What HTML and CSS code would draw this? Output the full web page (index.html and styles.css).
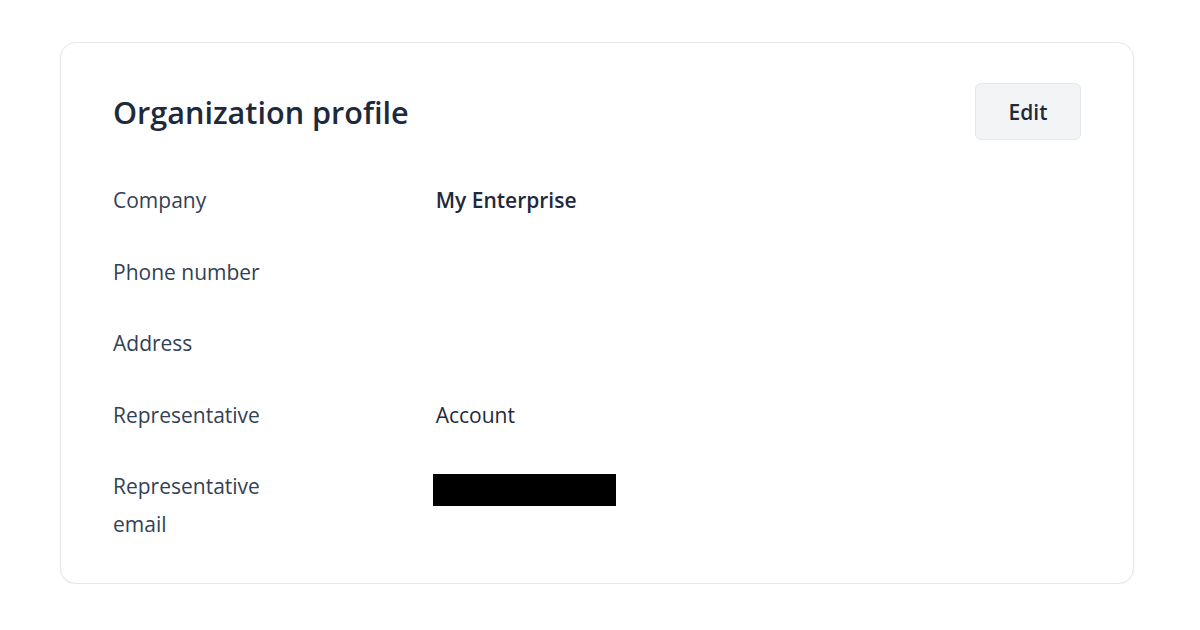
FILE: index.html
```html
<!DOCTYPE html>
<html lang="en">
<head>
<meta charset="utf-8">
<title>Organization profile</title>
<link rel="stylesheet" href="styles.css">
</head>
<body>
<section class="card">
  <header class="card-head">
    <h1 class="title">Organization profile</h1>
    <button class="btn" type="button">Edit</button>
  </header>
  <dl class="rows">
    <div class="row"><dt class="label">Company</dt><dd class="value strong">My Enterprise</dd></div>
    <div class="row"><dt class="label">Phone number</dt><dd class="value"></dd></div>
    <div class="row"><dt class="label">Address</dt><dd class="value"></dd></div>
    <div class="row"><dt class="label">Representative</dt><dd class="value">Account</dd></div>
    <div class="row"><dt class="label narrow">Representative email</dt><dd class="value"><span class="redact"></span></dd></div>
  </dl>
</section>
</body>
</html>
```
FILE: styles.css
```css
* { box-sizing: border-box; }
html, body { margin: 0; padding: 0; background: #ffffff; }
body {
  font-family: "Open Sans", "Noto Sans", "Liberation Sans", sans-serif;
  color: #334155;
  padding: 42px 66px 0 60px;
}
.card {
  width: 1074px;
  height: 542px;
  border: 1px solid #e5e7eb;
  border-radius: 16px;
  box-shadow: 0 1px 2px rgba(15, 23, 42, 0.06);
  padding: 40px 52px 0 52px;
  background: #fff;
}
.card-head {
  display: flex;
  justify-content: space-between;
  align-items: center;
  height: 57px;
  margin-bottom: 24px;
}
.title {
  margin: 0;
  font-size: 30.6px;
  font-weight: 600;
  color: #1e293b;
}
.btn {
  width: 106px;
  height: 57px;
  background: #f3f4f6;
  border: 1px solid #e5e7eb;
  border-radius: 6px;
  font-family: inherit;
  font-size: 21px;
  font-weight: 600;
  color: #1e293b;
  cursor: pointer;
}
.rows { margin: 0; }
.row {
  display: grid;
  grid-template-columns: 1fr 2fr;
  padding: 17px 0 16.5px;
  line-height: 38px;
  font-size: 21px;
}
.label { margin: 0; }
.narrow { max-width: 170px; }
.value { margin: 0; color: #1e293b; }
.strong { font-weight: 600; }
.redact {
  display: block;
  width: 183px;
  height: 32px;
  background: #000;
  margin: 7px 0 0 -3px;
}
```
